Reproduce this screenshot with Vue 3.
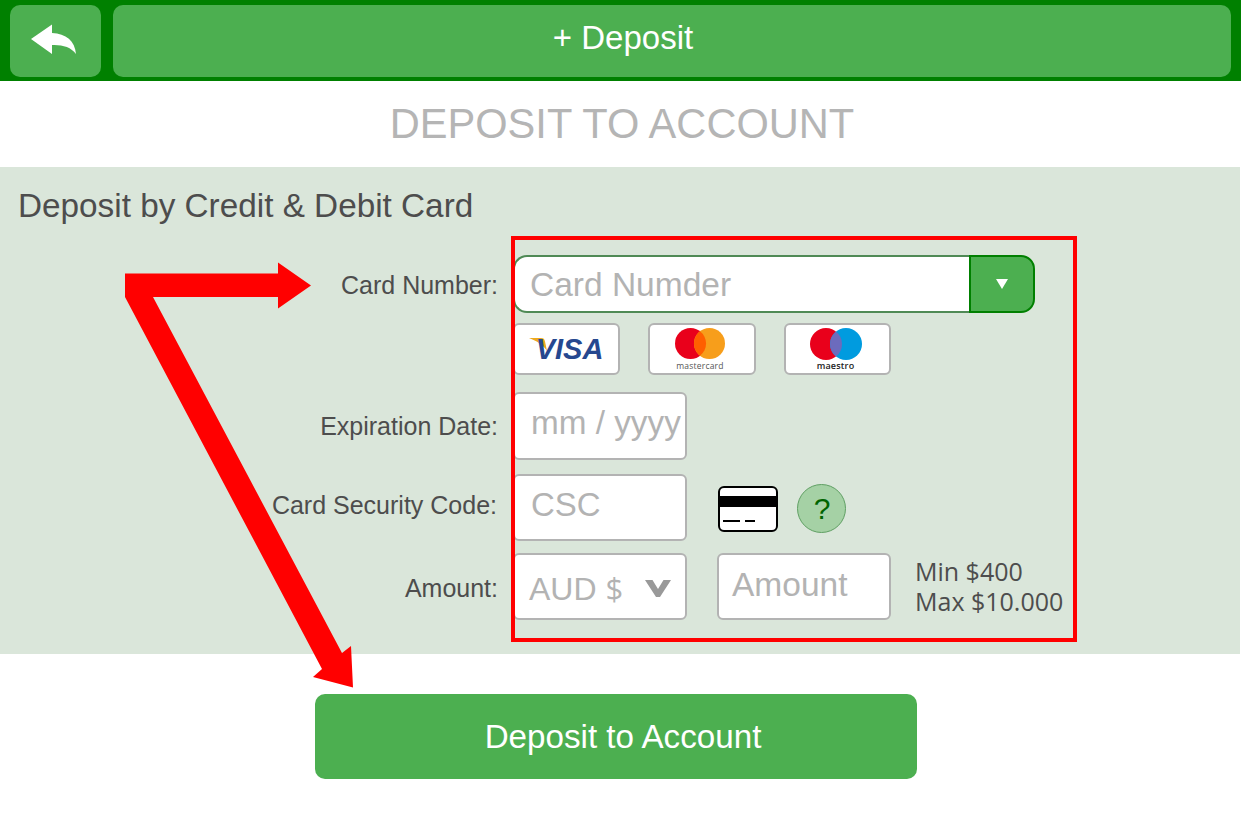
<script setup>
const limits = ['Min $400', 'Max $10.000'];
</script>

<template>
  <div class="page">
    <header class="topbar">
      <button type="button" class="back-btn" aria-label="Back">
        <svg width="91" height="72" viewBox="10 5 91 72">
          <path d="M31 39 L52 24.500 L52 33 C66 33.500 75 41 76 54 C71 47 62 44.500 52 45 L52 54 Z" fill="#fff" />
        </svg>
      </button>
      <button type="button" class="title-btn">+ Deposit</button>
    </header>

    <h1 class="page-title">DEPOSIT TO ACCOUNT</h1>

    <section class="panel">
      <h2 class="panel-title">Deposit by Credit &amp; Debit Card</h2>

      <div class="form">
        <div class="row row-card">
          <span class="label label-card">Card Number:</span>
          <div class="card-select">
            <div class="card-input">Card Numder</div>
            <div class="card-drop"><span class="tri"></span></div>
          </div>
        </div>

        <div class="row row-logos">
          <span class="label"></span>
          <div class="logos">
            <div class="logo logo-visa">
              <svg class="visa-swoosh" width="24" height="24" viewBox="0 0 24 24">
                <path d="M0 1 H12 C14.500 1 15.500 2 16 4.500 L18 14 C14 8 8 4 0 1 Z" fill="#eda91e" />
              </svg>
              <span class="visa-text">VISA</span>
            </div>
            <div class="logo logo-mc">
              <svg width="50" height="31" viewBox="0 0 50 31">
                <circle cx="15.500" cy="15.500" r="15.500" fill="#e9001b" />
                <circle cx="34.500" cy="15.500" r="15.500" fill="#f79e1b" />
                <path d="M25 3.200 A15.500 15.500 0 0 1 25 27.800 A15.500 15.500 0 0 1 25 3.200 Z" fill="#ff5f00" />
              </svg>
              <span class="mc-text">mastercard</span>
            </div>
            <div class="logo logo-mc logo-maestro">
              <svg width="52" height="32" viewBox="0 0 52 32">
                <circle cx="16" cy="16" r="16" fill="#e9001b" />
                <circle cx="36" cy="16" r="16" fill="#009bdf" />
                <path d="M26 3.500 A16 16 0 0 1 26 28.500 A16 16 0 0 1 26 3.500 Z" fill="#6c6bbd" />
              </svg>
              <span class="mc-text maestro">maestro</span>
            </div>
          </div>
        </div>

        <div class="row row-expiry">
          <span class="label">Expiration Date:</span>
          <div class="field field-small expiry">mm / yyyy</div>
        </div>

        <div class="row row-csc">
          <span class="label label-csc">Card Security Code:</span>
          <div class="field field-small csc">CSC</div>
          <div class="card-icon">
            <span class="stripe"></span>
            <span class="dashes"><i></i><i class="short"></i></span>
          </div>
          <div class="help">?</div>
        </div>

        <div class="row row-amount">
          <span class="label label-amount">Amount:</span>
          <div class="field field-small currency">
            <span class="aud">AUD<span class="dollar">$</span></span>
            <svg width="26" height="17" viewBox="0 0 26 17">
              <polygon points="0,0 7.500,0 13,9 18.500,0 26,0 15,17 11,17" fill="#999" />
            </svg>
          </div>
          <div class="field field-amount">Amount</div>
          <div class="limits">{{ limits.join('\n') }}</div>
        </div>
      </div>
    </section>

    <div class="actions">
      <button type="button" class="submit-btn">Deposit to Account</button>
    </div>

    <!-- red annotation drawn over the screen -->
    <svg class="annotation" width="1241" height="828" viewBox="0 0 1241 828">
      <rect x="513" y="238" width="562" height="402" fill="none" stroke="#f00" stroke-width="4" />
      <polygon
        fill="#f00"
        points="125,273.500 278,273.500 278,262.500 311,285.500 278,308.500 278,297 153,297 342,653 351,646 353,687.500 313,677 322,669 125,297"
      />
    </svg>
  </div>
</template>

<style>
html,body{margin:0;background:#fff}
</style>

<style scoped>
.page{position:relative;width:1241px;height:828px;overflow:hidden;background:#fff;font-family:"Liberation Sans",Arial,sans-serif}
button{font-family:inherit;border:0;cursor:pointer;padding:0}

.topbar{display:flex;gap:12px;height:81px;box-sizing:border-box;padding:5px 10px 4px;background:#008000}
.back-btn{display:block;width:91px;height:72px;border-radius:10px;background:#4caf50}
.back-btn svg{display:block}
.title-btn{flex:1;height:72px;padding:0 98px 6px 0;border-radius:10px;background:#4caf50;color:#fff;font-size:33px}

.page-title{margin:0;height:86px;line-height:85px;padding-left:3px;text-align:center;color:#b5b5b5;font-size:41.600px;font-weight:400}

.panel{height:487px;box-sizing:border-box;margin-right:1px;padding-top:20px;background:#dae6da;color:#4d4d4d}
.panel-title{margin:0 0 0 18px;height:36px;line-height:37px;font-size:33.300px;font-weight:400}

.form{margin-top:32px}
.row{display:flex;align-items:center}
.label{width:498px;flex:none;margin-right:15px;text-align:right;font-size:25px}
.label-card{padding-top:2px}
.label-csc{padding-bottom:5px;margin-right:16px;width:497px}
.label-amount{padding-top:4px}
.row-card{height:58px}
.row-logos{height:52px;margin-top:10px}
.row-expiry{height:68px;margin-top:17px}
.row-csc{height:67px;margin-top:14px}
.row-amount{height:67px;margin-top:12px}

.card-select{display:flex;width:522px;height:58px}
.card-input{flex:1;box-sizing:border-box;line-height:56px;padding-left:15px;border:2px solid #4f8a55;border-right:0;border-radius:14px 0 0 14px;background:#fff;color:#b3b3b3;font-size:33.500px}
.card-drop{display:flex;align-items:center;justify-content:center;width:66px;box-sizing:border-box;border:2px solid #008000;border-radius:0 14px 14px 0;background:#4caf50}
.tri{width:0;height:0;border-left:6px solid transparent;border-right:6px solid transparent;border-top:10px solid #fff}

.logos{display:flex;gap:28px}
.logo{position:relative;display:flex;align-items:center;justify-content:center;box-sizing:border-box;width:108px;height:52px;border:2px solid #b3b3b3;border-radius:6px;background:#fff}
.logo-visa{width:107px}
.logo-maestro{width:107px}
.logo-mc{flex-direction:column;justify-content:flex-start;padding:3px 4px 0 0}
.logo-mc svg{display:block;flex:none}
.visa-swoosh{position:absolute;left:14px;top:12px}
.visa-text{position:relative;margin-left:6px;color:#26488f;font-size:29px;font-weight:700;font-style:italic}
.mc-text{margin-top:2px;color:#555;font-family:"Open Sans",sans-serif;font-size:8.500px;line-height:10px;letter-spacing:.2px}
.maestro{color:#222;font-size:9px;font-weight:600;margin-top:1px}

.field{box-sizing:border-box;border:2px solid #b3b3b3;border-radius:6px;background:#fff;color:#b3b3b3;font-size:33px}
.field-small{width:174px;height:100%;line-height:60px;padding-left:16px}
.expiry{line-height:57px;font-size:33.300px}
.csc{line-height:58px}
.currency{display:flex;align-items:center;justify-content:space-between;padding:4px 14px 0 14px;font-size:32px}
.aud{display:flex;align-items:center;line-height:1}
.dollar{margin-left:9px;font-family:"Open Sans",sans-serif;font-size:31px}
.field-amount{width:174px;height:100%;margin-left:30px;line-height:60px;padding-left:13px;font-size:33.500px}
.card-icon{display:flex;flex-direction:column;box-sizing:border-box;width:60px;height:46px;margin:2px 0 0 31px;border:2px solid #000;border-radius:6px;background:#fff}
.stripe{display:block;height:11px;margin-top:8px;background:#000}
.dashes{display:flex;gap:5px;margin:13px 0 0 3px}
.dashes i{display:block;width:17px;height:2px;background:#000}
.dashes i.short{width:10px}
.help{width:49px;height:49px;box-sizing:border-box;margin:2px 0 0 19px;padding-left:1px;border:1px solid #5f9f63;border-radius:50%;background:#a5d1a5;color:#006400;font-size:30px;line-height:48px;text-align:center}
.limits{margin:0 0 2px 24px;white-space:pre-line;font-family:"Open Sans","Liberation Sans",sans-serif;font-size:25px;line-height:30px}

.actions{display:flex;justify-content:center;padding-top:40px;padding-right:9px}
.submit-btn{width:602px;height:85px;padding-left:14px;border-radius:10px;background:#4caf50;color:#fff;font-size:33.200px}

.annotation{position:absolute;left:0;top:0;pointer-events:none}
</style>
